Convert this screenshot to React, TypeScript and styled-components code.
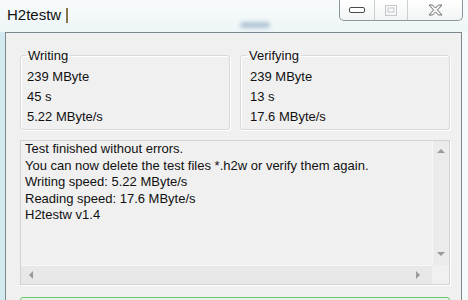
import React from "react";
import styled, { createGlobalStyle } from "styled-components";

const GlobalStyle = createGlobalStyle`
  html, body {
    margin: 0;
    padding: 0;
    background: #e4f2f4;
  }
`;

const font = `"Liberation Sans", Arial, sans-serif`;

const results = [
  { title: "Writing", size: "239 MByte", time: "45 s", speed: "5.22 MByte/s", inset: 6, label: 7 },
  { title: "Verifying", size: "239 MByte", time: "13 s", speed: "17.6 MByte/s", inset: 9, label: 8 },
];

const log = [
  "Test finished without errors.",
  "You can now delete the test files *.h2w or verify them again.",
  "Writing speed: 5.22 MByte/s",
  "Reading speed: 17.6 MByte/s",
  "H2testw v1.4",
];

export default function App() {
  return (
    <>
      <GlobalStyle />
      <Window>
        <TitleBar>
          <Title>
            H2testw
            <Caret />
          </Title>
          <Smudge />
          <Controls>
            <CtrlButton $w={34}>
              <svg width="16" height="6" viewBox="0 0 16 6">
                <rect x="0.5" y="0.5" width="15" height="5" rx="1.5" fill="#fff" stroke="#4a4a4a" />
              </svg>
            </CtrlButton>
            <CtrlButton $w={32}>
              <svg width="12" height="11" viewBox="0 0 12 11">
                <rect x="0.5" y="0.5" width="11" height="10" fill="none" stroke="#c4c8cc" />
                <rect x="3" y="3" width="6" height="4" fill="none" stroke="#c4c8cc" />
              </svg>
            </CtrlButton>
            <CtrlButton $w={54} $last>
              <svg width="15" height="12" viewBox="0 0 15 12">
                <path
                  d="M1 1 L4.5 1 L7.5 4 L10.5 1 L14 1 L9.5 6 L14 11 L10.5 11 L7.5 8 L4.5 11 L1 11 L5.5 6 Z"
                  fill="#f4f4f4"
                  stroke="#6e6e6e"
                  strokeWidth="1"
                  strokeLinejoin="round"
                />
              </svg>
            </CtrlButton>
          </Controls>
        </TitleBar>
        <Client>
          <GroupRow>
            {results.map((r) => (
              <Group key={r.title}>
                <Legend $offset={r.label}>{r.title}</Legend>
                <Values $inset={r.inset}>
                  <Value>{r.size}</Value>
                  <Value>{r.time}</Value>
                  <Value>{r.speed}</Value>
                </Values>
              </Group>
            ))}
          </GroupRow>
          <LogBox>
            <LogText>
              {log.map((line) => (
                <div key={line}>{line}</div>
              ))}
            </LogText>
            <VScroll>
              <Arrow $dir="up" />
              <Arrow $dir="down" />
            </VScroll>
            <HScroll>
              <Arrow $dir="left" />
              <Arrow $dir="right" />
            </HScroll>
            <Corner />
          </LogBox>
          <Progress />
        </Client>
      </Window>
    </>
  );
}

const Window = styled.div`
  width: 468px;
  height: 300px;
  overflow: hidden;
  display: flex;
  flex-direction: column;
  background: linear-gradient(90deg, #cfe9ee 0px, #f2f8f9 30px, #fbfdfd 50%, #f4f9fa 100%);
  font-family: ${font};
`;

const TitleBar = styled.div`
  height: 32px;
  flex-shrink: 0;
  display: flex;
  align-items: flex-start;
  background: linear-gradient(180deg, #f8fbfb 0%, #eef6f7 100%);
`;

const Title = styled.div`
  font-size: 15px;
  color: #111;
  padding: 7px 0 0 7px;
  display: flex;
  align-items: center;
  gap: 5px;
  line-height: 16px;
`;

const Caret = styled.span`
  display: inline-block;
  width: 2px;
  height: 15px;
  background: #8a744a;
`;

const Smudge = styled.div`
  margin: 22px 0 0 172px;
  width: 30px;
  height: 6px;
  border-radius: 3px;
  background: #9fb7cc;
  filter: blur(2px);
  opacity: 0.8;
`;

const Controls = styled.div`
  margin-left: auto;
  margin-right: 5px;
  height: 20px;
  display: flex;
  border: 1px solid #8e969c;
  border-top: none;
  border-radius: 0 0 5px 5px;
  background: linear-gradient(180deg, #ffffff 0%, #f1f4f5 100%);
  overflow: hidden;
`;

const CtrlButton = styled.div<{ $w: number; $last?: boolean }>`
  width: ${(p) => p.$w}px;
  display: flex;
  align-items: center;
  justify-content: center;
  border-right: ${(p) => (p.$last ? "none" : "1px solid #c9cfd3")};
`;

const Client = styled.div`
  margin-left: 5px;
  width: 457px;
  flex: 1;
  min-height: 0;
  box-sizing: border-box;
  border: 1px solid #7c868d;
  border-bottom: none;
  background: #f0f0f0;
  padding: 15px 12px 0 14px;
  display: flex;
  flex-direction: column;
  overflow: hidden;

  & > * {
    flex-shrink: 0;
  }
`;

const GroupRow = styled.div`
  display: grid;
  grid-template-columns: 210px 210px;
  gap: 10px;
`;

const Group = styled.fieldset`
  margin: 0;
  height: 82px;
  box-sizing: border-box;
  padding: 0;
  border: 1px solid #d5dadd;
  border-radius: 3px;
  box-shadow: inset 1px 1px 0 #fff, 1px 1px 0 #fff;
  font-size: 13px;
  color: #111;
`;

const Legend = styled.legend<{ $offset: number }>`
  padding: 0 2px;
  margin-left: ${(p) => p.$offset - 2}px;
  line-height: 15px;
`;

const Values = styled.div<{ $inset: number }>`
  padding: 4px 0 0 ${(p) => p.$inset}px;
`;

const Value = styled.div`
  line-height: 20px;
`;

const LogBox = styled.div`
  margin-top: 10px;
  width: 430px;
  height: 145px;
  box-sizing: border-box;
  border: 1px solid #cfd3d6;
  box-shadow: 1px 1px 0 #fff;
  display: grid;
  grid-template-columns: 1fr 17px;
  grid-template-rows: 1fr 19px;
  background: #f0f0f0;
`;

const LogText = styled.div`
  padding: 0 0 0 4px;
  font-size: 13px;
  line-height: 16.5px;
  color: #111;
`;

const VScroll = styled.div`
  background: #ebebeb;
  border-left: 1px solid #f7f7f7;
  display: flex;
  flex-direction: column;
  align-items: center;
  justify-content: space-between;
  padding: 8px 0 9px;
`;

const HScroll = styled.div`
  background: #e8e8e8;
  border-top: 1px solid #f7f7f7;
  display: flex;
  align-items: center;
  justify-content: space-between;
  padding: 0 12px 0 8px;
`;

const Corner = styled.div`
  background: #f0f0f0;
`;

const arrowBorders: Record<string, string> = {
  up: "border-left: 4px solid transparent; border-right: 4px solid transparent; border-bottom: 4px solid #9a9a9a;",
  down: "border-left: 4px solid transparent; border-right: 4px solid transparent; border-top: 4px solid #9a9a9a;",
  left: "border-top: 4px solid transparent; border-bottom: 4px solid transparent; border-right: 4px solid #9a9a9a;",
  right: "border-top: 4px solid transparent; border-bottom: 4px solid transparent; border-left: 4px solid #9a9a9a;",
};

const Arrow = styled.span<{ $dir: "up" | "down" | "left" | "right" }>`
  width: 0;
  height: 0;
  ${(p) => arrowBorders[p.$dir]}
`;

const Progress = styled.div`
  margin-top: 12px;
  width: 430px;
  height: 20px;
  box-sizing: border-box;
  border: 1px solid #6cc46c;
  border-radius: 3px;
  background: #e6f4e6;
`;
